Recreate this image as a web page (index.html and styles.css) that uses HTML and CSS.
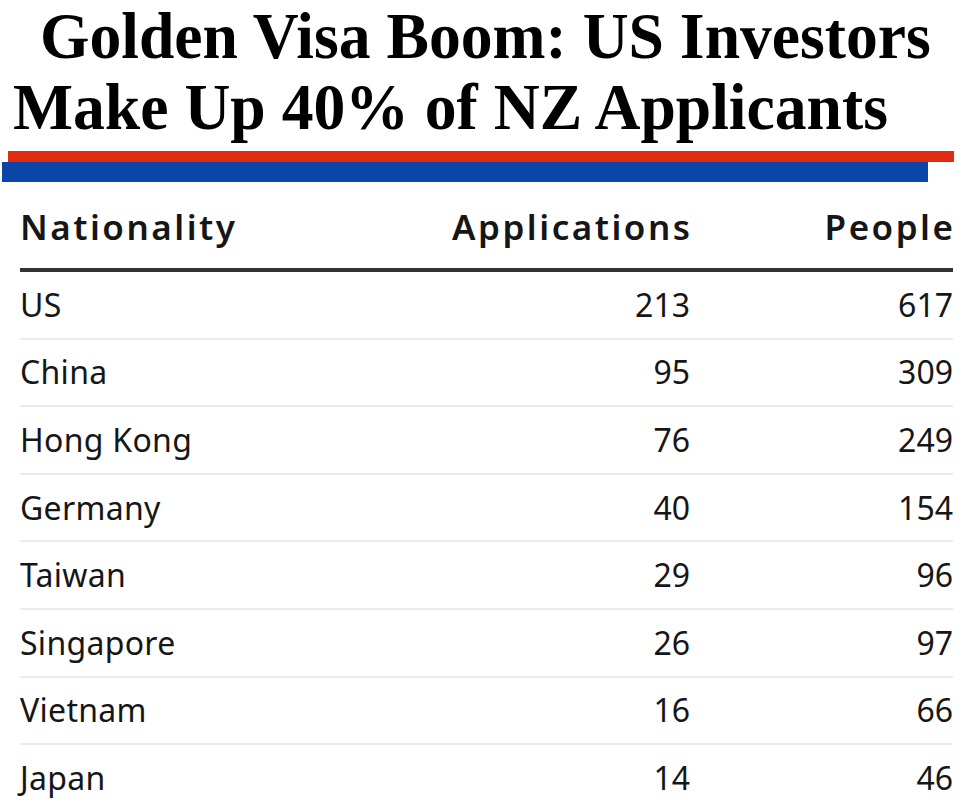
FILE: index.html
```html
<!DOCTYPE html>
<html lang="en">
<head>
<meta charset="utf-8">
<title>Golden Visa Boom</title>
<link rel="stylesheet" href="styles.css">
</head>
<body>
<div class="page">
  <h1 class="title">
    <span class="title-line line-1"><span class="title-text">Golden Visa Boom: US Investors</span></span>
    <span class="title-line line-2"><span class="title-text">Make Up 40% of NZ Applicants</span></span>
  </h1>
  <div class="bar bar-red"></div>
  <div class="bar bar-blue"></div>
  <div class="table">
    <div class="row head">
      <div class="cell name">Nationality</div>
      <div class="cell num">Applications</div>
      <div class="cell num">People</div>
    </div>
    <div class="row"><div class="cell name">US</div><div class="cell num">213</div><div class="cell num">617</div></div>
    <div class="row"><div class="cell name">China</div><div class="cell num">95</div><div class="cell num">309</div></div>
    <div class="row"><div class="cell name">Hong Kong</div><div class="cell num">76</div><div class="cell num">249</div></div>
    <div class="row"><div class="cell name">Germany</div><div class="cell num">40</div><div class="cell num">154</div></div>
    <div class="row"><div class="cell name">Taiwan</div><div class="cell num">29</div><div class="cell num">96</div></div>
    <div class="row"><div class="cell name">Singapore</div><div class="cell num">26</div><div class="cell num">97</div></div>
    <div class="row"><div class="cell name">Vietnam</div><div class="cell num">16</div><div class="cell num">66</div></div>
    <div class="row last"><div class="cell name">Japan</div><div class="cell num">14</div><div class="cell num">46</div></div>
  </div>
</div>
</body>
</html>
```
FILE: styles.css
```css
html, body {
  margin: 0;
  padding: 0;
  background: #ffffff;
}
.page {
  width: 975px;
  height: 808px;
  overflow: hidden;
}
.title {
  margin: 0;
  font-family: "Liberation Serif", "Times New Roman", serif;
  font-weight: 700;
  font-size: 66px;
  line-height: 71px;
  color: #000000;
}
.title-line {
  display: block;
  white-space: nowrap;
  height: 71px;
}
.title-text {
  display: inline-block;
  transform: scaleX(0.964);
  transform-origin: left center;
}
.line-1 { padding-left: 40px; }
.line-2 { padding-left: 13px; }
.bar-red {
  margin-top: 9px;
  margin-left: 8px;
  width: 946px;
  height: 11px;
  background: #e12a10;
}
.bar-blue {
  margin-left: 2px;
  width: 926px;
  height: 20px;
  background: #0b45a6;
}
.table {
  margin-left: 20px;
  width: 933px;
  font-family: "Noto Sans", "Open Sans", sans-serif;
  color: #161616;
}
.row {
  display: grid;
  grid-template-columns: 370px 300px 263px;
  align-items: center;
  height: 65.6px;
  border-bottom: 2px solid #ebebeb;
  font-size: 32px;
  line-height: 38px;
}
.cell.name {
  text-align: left;
  letter-spacing: 0.3px;
}
.cell.num { text-align: right; }
.row.head {
  height: 90px;
  box-sizing: border-box;
  align-items: end;
  border-bottom: 4px solid #333333;
  font-size: 35px;
  font-weight: 600;
  line-height: 42px;
}
.row.head .cell {
  padding-bottom: 20px;
  letter-spacing: 2.5px;
}
.row.head .cell.num {
  margin-right: -2.5px;
}
.row.last { border-bottom: none; }
```
